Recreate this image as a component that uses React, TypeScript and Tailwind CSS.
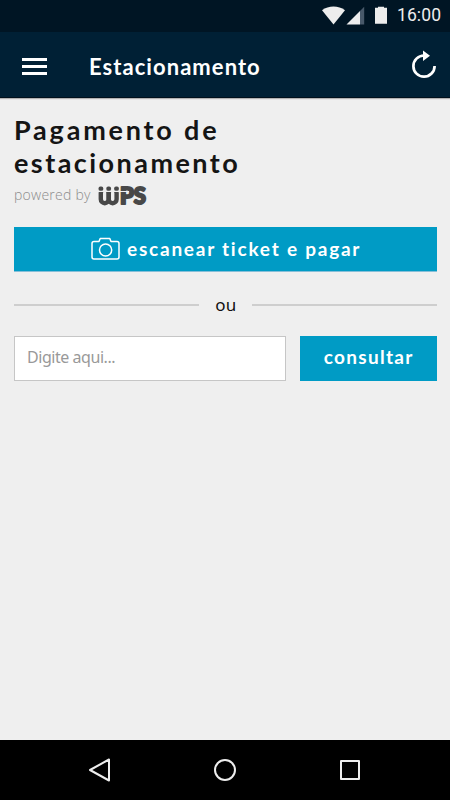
import type { ReactNode } from "react";

function StatusBar() {
  return (
    <div className="flex h-8 items-center bg-[#001524] pr-[9px] pl-[321px] text-[#ededed]">
      <svg width="68" height="20" viewBox="0 0 68 20" fill="currentColor" className="-mt-px shrink-0">
        <path d="M1 4.200C7.500-.6 17.500-.6 24 4.200L12.500 18.500Z" />
        <path d="M25.500 18.500L39 5V18.500Z" />
        <path d="M39 5L43.200 0.800V18.500H39Z" fill="#48596a" />
        <path d="M54 1.800H57V0.800H63V1.800H66V17.700H54Z" />
      </svg>
      <span className="ml-[8px] text-[17.500px] leading-none tracking-[0.1px] whitespace-nowrap">16:00</span>
    </div>
  );
}

function AppBar() {
  return (
    <header className="flex h-[66px] items-center border-b border-[#00101c] bg-[#002035] pr-[13px] pl-[22px] text-white shadow-[0_1px_1px_rgba(0,0,0,0.25)]">
      <button aria-label="Menu" className="mt-1 flex w-[25px] flex-col gap-[4.500px]">
        <span className="h-[2.600px] w-full bg-white" />
        <span className="h-[2.600px] w-full bg-white" />
        <span className="h-[2.600px] w-full bg-white" />
      </button>
      <h1 className="mt-[5px] ml-[42px] font-['Lato'] text-[22px] leading-7 font-bold tracking-[1.050px]">Estacionamento</h1>
      <svg width="26" height="29" viewBox="0 0 26 29" className="ml-auto" fill="none" aria-label="Atualizar">
        <path d="M13 5.500A10.600 10.600 0 1 0 23.600 16" stroke="white" strokeWidth="2.700" />
        <path d="M12 0.500L19 5.700L12 11Z" fill="white" />
      </svg>
    </header>
  );
}

function WpsLogo() {
  return (
    <svg width="54" height="28" viewBox="0 -3 54 28" className="-my-[3px] ml-[6px] overflow-visible" fill="#484848" aria-label="WPS">
      <rect x="3.800" y="4" width="7.900" height="14.200" rx="3.900" fill="none" stroke="#484848" strokeWidth="4.400" />
      <rect x="11.700" y="4" width="7.900" height="14.200" rx="3.900" fill="none" stroke="#484848" strokeWidth="4.400" />
      <rect x="0" y="0" width="22.600" height="7" fill="#efefef" />
      <rect x="1.500" y="1.500" width="4.800" height="4.300" rx="1.900" />
      <rect x="9.300" y="1.500" width="4.800" height="4.300" rx="1.900" />
      <rect x="17.100" y="1.500" width="4.800" height="4.300" rx="1.900" />
      <text x="23" y="19" fontSize="22" fontWeight="900" textLength="26" lengthAdjust="spacingAndGlyphs" stroke="#484848" strokeWidth="2" strokeLinejoin="round" className="font-['Lato']">PS</text>
      <path d="M22 6.500H32" stroke="#efefef" strokeWidth="1" />
    </svg>
  );
}

function Camera() {
  return (
    <svg width="29" height="24" viewBox="0 0 29 24" fill="none" stroke="white" strokeWidth="1.500" strokeLinejoin="round">
      <path d="M3 4.500H8L9.200 1.500H18.800L20 4.500H26Q28 4.500 28 6.500V20Q28 22 26 22H3Q1 22 1 20V6.500Q1 4.500 3 4.500Z" />
      <circle cx="14.600" cy="13" r="6.100" />
    </svg>
  );
}

function BlueButton({ children, className }: { children: ReactNode; className: string }) {
  return <button className={`flex items-center bg-[#009bc5] font-['Lato'] text-[19px] font-bold whitespace-nowrap text-white ${className}`}>{children}</button>;
}

export default function App() {
  return (
    <div className="flex h-[800px] w-[450px] flex-col overflow-hidden bg-[#efefef] font-['Roboto',sans-serif]">
      <StatusBar />
      <AppBar />
      <main className="flex grow flex-col pt-[15px] pr-[13.500px] pl-[14px]">
        <h2 className="font-['Lato'] text-[27px] leading-[33px] font-bold whitespace-nowrap text-[#151515]">
          <span className="block tracking-[2.800px]">Pagamento de</span>
          <span className="block tracking-[2.450px]">estacionamento</span>
        </h2>
        <div className="mt-[6px] flex h-[22px] items-center">
          <span className="-mt-[3px] font-['Open_Sans'] text-[14px] leading-5 font-light tracking-[0.250px] whitespace-nowrap text-[#8c8c8c]">powered by</span>
          <WpsLogo />
        </div>
        <BlueButton className="mt-[20px] h-[45px] border-b border-[#86bfd8] pl-[77px]">
          <Camera />
          <span className="ml-[7px] tracking-[1.770px]">escanear ticket e pagar</span>
        </BlueButton>
        <div className="mt-[21px] flex h-6 items-center">
          <span className="h-[2px] w-[185px] bg-[#cecece]" />
          <span className="grow pl-px text-center font-['Noto_Sans'] text-[17px] leading-6 text-[#111]">ou</span>
          <span className="h-[2px] w-[185px] bg-[#cecece]" />
        </div>
        <div className="mt-[19px] flex gap-[14px]">
          <input
            placeholder="Digite aqui..."
            className="h-[45px] w-[272px] border-[1.500px] border-[#c6c6c6] bg-white px-[12px] pb-[3px] font-['Noto_Sans'] text-[16px] tracking-[-0.450px] outline-none placeholder:text-[#999]"
          />
          <BlueButton className="h-[45px] grow justify-center pb-[3px]">
            <span className="ml-px tracking-[1.300px]">consultar</span>
          </BlueButton>
        </div>
      </main>
      <nav className="flex h-[60px] items-center justify-between bg-black px-[88px] text-[#ededed]">
        <svg width="24" height="26" viewBox="0 0 24 26" fill="none" stroke="currentColor" strokeWidth="2" strokeLinejoin="round" aria-label="Voltar">
          <path d="M2 13L21 2.500V23.500Z" />
        </svg>
        <svg width="24" height="24" viewBox="0 0 24 24" fill="none" stroke="currentColor" strokeWidth="2" aria-label="Início">
          <circle cx="12" cy="12" r="10" />
        </svg>
        <svg width="24" height="24" viewBox="0 0 24 24" fill="none" stroke="currentColor" strokeWidth="2" strokeLinejoin="round" aria-label="Recentes">
          <rect x="3" y="3" width="18" height="18" />
        </svg>
      </nav>
    </div>
  );
}
